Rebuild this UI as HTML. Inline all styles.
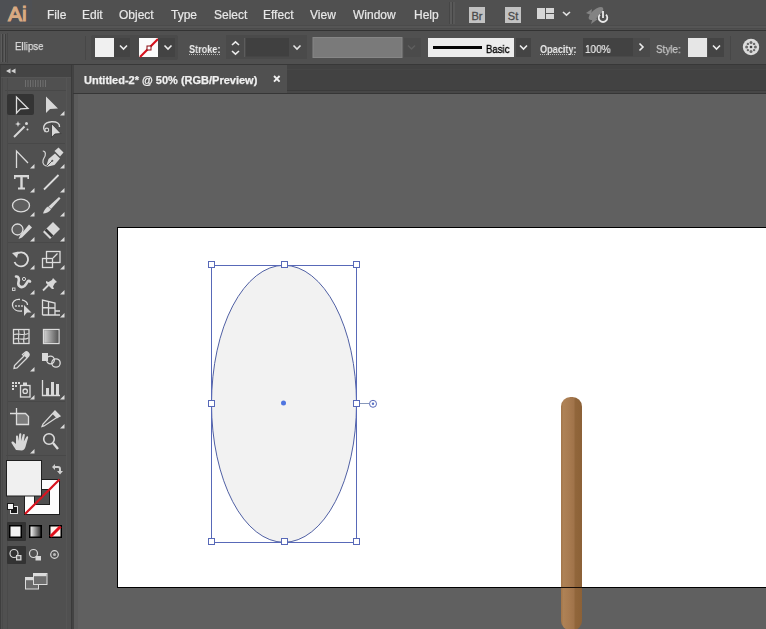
<!DOCTYPE html>
<html><head><meta charset="utf-8">
<style>
*{margin:0;padding:0;box-sizing:border-box}
html,body{width:766px;height:629px;overflow:hidden;background:#606060;font-family:"Liberation Sans",sans-serif;-webkit-font-smoothing:antialiased}
.mi,.ct{will-change:transform}
.a{position:absolute}
.mi{position:absolute;top:7px;font-size:12px;color:#e8e8e8;line-height:16px;white-space:nowrap;-webkit-text-stroke:0.2px #e8e8e8}
.ct{position:absolute;font-size:11px;color:#e0e0e0;line-height:14px;white-space:nowrap;-webkit-text-stroke:0.25px currentColor}
svg{position:absolute;left:0;top:0}
</style></head><body>
<!-- backgrounds -->
<div class="a" style="left:0;top:0;width:766px;height:30px;background:#505050"></div>
<div class="a" style="left:0;top:30px;width:766px;height:1px;background:#333"></div><div class="a" style="left:0;top:25px;width:766px;height:1px;background:#4b4b4b"></div><div class="a" style="left:0;top:26px;width:766px;height:2px;background:#555"></div><div class="a" style="left:0;top:28px;width:766px;height:1px;background:#4b4b4b"></div>
<div class="a" style="left:0;top:31px;width:766px;height:33px;background:#505050"></div>
<div class="a" style="left:0;top:64px;width:766px;height:1px;background:#383838"></div>
<div class="a" style="left:0;top:65px;width:71px;height:564px;background:#505050"></div>
<div class="a" style="left:0;top:65px;width:71px;height:13px;background:#444"></div>
<div class="a" style="left:71px;top:65px;width:1px;height:564px;background:#3a3a3a"></div><div class="a" style="left:72px;top:65px;width:2px;height:564px;background:#434343"></div><div class="a" style="left:74px;top:94px;width:4px;height:535px;background:#5b5b5b"></div>
<div class="a" style="left:73px;top:65px;width:693px;height:28px;background:#424242"></div>
<div class="a" style="left:74px;top:65px;width:213px;height:28px;background:#505050"></div>
<div class="a" style="left:73px;top:93px;width:693px;height:1px;background:#363636"></div><div class="a" style="left:287px;top:90px;width:479px;height:1px;background:#3b3b3b"></div><div class="a" style="left:287px;top:91px;width:479px;height:2px;background:#474747"></div><div class="a" style="left:287px;top:69px;width:479px;height:1px;background:#464646"></div>
<!-- artboard -->
<div class="a" style="left:117px;top:227px;width:660px;height:361px;background:#fff;border:1px solid #000"></div>

<svg width="766" height="629" viewBox="0 0 766 629">

<!-- ===== TOOLS PANEL ===== -->
<rect x="0" y="77" width="71" height="1" fill="#555"/>
<path d="M6,71 L10.5,68.5 L10.5,73.5 Z M11,71 L15.5,68.5 L15.5,73.5 Z" fill="#d0d0d0"/>
<g fill="#6e6e6e">
<rect x="25" y="80" width="1" height="7"/><rect x="27.5" y="80" width="1" height="7"/><rect x="30" y="80" width="1" height="7"/>
<rect x="32.5" y="80" width="1" height="7"/><rect x="35" y="80" width="1" height="7"/><rect x="37.5" y="80" width="1" height="7"/>
<rect x="40" y="80" width="1" height="7"/><rect x="42.5" y="80" width="1" height="7"/><rect x="45" y="80" width="1" height="7"/>
</g>
<rect x="5" y="90" width="61" height="1" fill="#484848"/>
<rect x="0" y="65" width="1" height="564" fill="#3e3e3e"/><rect x="2" y="78" width="1" height="551" fill="#4a4a4a"/><rect x="7" y="78" width="1" height="551" fill="#4a4a4a"/>
<rect x="66" y="78" width="1" height="551" fill="#555"/>
<rect x="7" y="94" width="27" height="21" rx="2" fill="#343434"/>
<rect x="8" y="143" width="57" height="1" fill="#484848"/>
<rect x="8" y="242" width="57" height="1" fill="#484848"/>
<rect x="8" y="401" width="57" height="1" fill="#484848"/>

<g fill="#dadada">
<!-- flyout triangles -->
<path d="M60,115.5 L64.5,115.5 L64.5,111 Z"/>
<path d="M60,168.5 L64.5,168.5 L64.5,164 Z"/><path d="M30,168.5 L34.5,168.5 L34.5,164 Z"/>
<path d="M30,192.5 L34.5,192.5 L34.5,188 Z"/><path d="M60,192.5 L64.5,192.5 L64.5,188 Z"/>
<path d="M30,216.5 L34.5,216.5 L34.5,212 Z"/><path d="M60,216.5 L64.5,216.5 L64.5,212 Z"/>
<path d="M30,241.5 L34.5,241.5 L34.5,237 Z"/><path d="M60,241.5 L64.5,241.5 L64.5,237 Z"/>
<path d="M30,269.5 L34.5,269.5 L34.5,265 Z"/><path d="M60,269.5 L64.5,269.5 L64.5,265 Z"/>
<path d="M30,294.5 L34.5,294.5 L34.5,290 Z"/><path d="M60,294.5 L64.5,294.5 L64.5,290 Z"/>
<path d="M30,317.5 L34.5,317.5 L34.5,313 Z"/><path d="M60,317.5 L64.5,317.5 L64.5,313 Z"/>
<path d="M30,371.5 L34.5,371.5 L34.5,367 Z"/>
<path d="M30,399.5 L34.5,399.5 L34.5,395 Z"/><path d="M60,399.5 L64.5,399.5 L64.5,395 Z"/>
<path d="M60,428.5 L64.5,428.5 L64.5,424 Z"/>
<path d="M30,453.5 L34.5,453.5 L34.5,449 Z"/>
</g>

<g stroke="#dcdcdc" fill="none" stroke-width="1.3" stroke-linejoin="miter">
<!-- selection -->
<path d="M16.5,97 L16.5,113 L20.5,108.8 L28,108.5 Z"/>
<!-- anchor point -->
<path d="M16.5,168 L16.5,151 L28,163"/>
<!-- line -->
<line x1="44" y1="189.5" x2="58.5" y2="175" stroke-width="1.8"/>
<!-- ellipse -->
<ellipse cx="21" cy="205.5" rx="8.5" ry="6.3" fill="#5e5e5e"/>
<!-- shaper circle -->
<circle cx="17.5" cy="229.5" r="5.5" fill="#5e5e5e"/>
<!-- rotate -->
<path d="M16,254.5 A7,7 0 1 1 14.5,262" stroke-width="1.8"/>
<!-- scale -->
<rect x="46.5" y="251.5" width="13.5" height="11"/>
<rect x="42.5" y="258.5" width="10" height="9"/>
<line x1="53" y1="258" x2="57.5" y2="253.5"/>
<!-- shape builder loop -->
<path d="M20,299.5 C15,299 12,302 12.5,305.5 C13,309.5 17,311.5 22,311 M22,299.8 C25,300.5 27.5,302 27.5,305"/>
<!-- perspective grid -->
<path d="M42.5,315 L42.5,300 L55,303 L55,315 M48.5,301.5 L48.5,315 M42.5,307.5 L55,308 M42.5,315 L60,315 M55,311 L60,311"/>
<!-- mesh -->
<rect x="13.5" y="329.5" width="15.5" height="14"/>
<path d="M14,334.5 C18,333 23,336 28.5,333.5 M14,339 C19,337.5 23,341 28.5,338 M18.5,330 C20,334 17,339 19,343 M24,330 C25.5,334 22.5,339 24,343" stroke-width="1.1"/>
<!-- gradient -->
<rect x="43.5" y="329.5" width="15.5" height="14"/>
<!-- blend circles -->
<circle cx="50.5" cy="360" r="3.8"/>
<circle cx="56" cy="363" r="4.2"/>
<!-- symbol sprayer bottle -->
<rect x="20.5" y="385.5" width="9.5" height="11.5"/>
<circle cx="25.2" cy="391.2" r="2.2"/>
<!-- column graph -->
<path d="M42.5,380 L42.5,395.5 L60,395.5"/>
<!-- artboard -->
<path d="M16.5,413.5 L25.5,413.5 L28.5,416.5 L28.5,424.5 L16.5,424.5 Z" fill="#7c7c7c"/><path d="M16.5,408 L16.5,413.5 M10,413.5 L16.5,413.5"/>
<!-- zoom -->
<circle cx="49" cy="439" r="5.3" stroke-width="1.6"/>
<line x1="53" y1="443" x2="58" y2="449" stroke-width="2.4"/>
</g>

<g fill="#d8d8d8">
<!-- direct selection -->
<path d="M46,96.5 L46,113 L50,109 L58,108.5 Z"/>
<!-- magic wand -->
<line x1="14" y1="137" x2="24.5" y2="126.5" stroke="#d8d8d8" stroke-width="2"/>
<path d="M18,121 L18.8,123.2 L21,124 L18.8,124.8 L18,127 L17.2,124.8 L15,124 L17.2,123.2 Z"/>
<circle cx="26.5" cy="123.5" r="1.5"/><circle cx="27.5" cy="129.5" r="1"/>
<!-- lasso -->
<path d="M45.5,132 C42,128 43.5,122.5 51.5,121.8 C57,121.5 60,123.5 59.5,127" fill="none" stroke="#d8d8d8" stroke-width="1.4"/>
<circle cx="46.8" cy="130" r="1.9" fill="none" stroke="#d8d8d8" stroke-width="1.1"/>
<path d="M51.5,123.5 L51.5,137.5 L54.8,134 L61,133.5 Z" stroke="#333" stroke-width="0.8"/>
<!-- pen -->
<path d="M42.8,151 C46,151 46,155 44,158 C42,161 42.5,165 46,166" fill="none" stroke="#d8d8d8" stroke-width="1.2"/>
<path d="M46,167 L48.5,159 L55,153.5 L60,158.5 L54.5,165 Z"/>
<path d="M54.5,151 L58.5,147.5 L63.5,152.5 L60,156.5 Z"/>
<line x1="46.5" y1="166.5" x2="52" y2="161" stroke="#555" stroke-width="1"/>
<circle cx="52.3" cy="160.7" r="1" fill="#555"/>
<!-- type -->
<rect x="14" y="175" width="15" height="2.3"/>
<rect x="14" y="175" width="1.6" height="4"/><rect x="27.4" y="175" width="1.6" height="4"/>
<rect x="20.3" y="175" width="2.4" height="14"/>
<rect x="18" y="187.5" width="7" height="2"/>
<!-- paintbrush -->
<path d="M59,197 L60.5,198.5 L51,209 L48.5,206.5 Z"/>
<path d="M48,206.5 L51,209.5 C49,212 46,213.5 43,213.5 C44,210.5 45.5,208 48,206.5 Z"/>
<!-- shaper pencil -->
<path d="M29,224.5 L32,227.5 L22,237.5 L18.5,239 L20,235.5 Z"/>
<!-- eraser -->
<path d="M43,232 L53,222 L60,229 L50,239 Z"/>
<path d="M44.5,230.5 L46.5,228.5 L53.5,235.5 L51.5,237.5 Z" fill="#3c3c3c"/>
<!-- rotate arrowhead -->
<path d="M12,253 L18.5,251.5 L17,258 Z"/>
<!-- warp -->
<path d="M16,276.5 C18.5,276 19.5,279 18.5,282 C17.5,286 21,288.5 24.5,286 C27.5,283.5 27.5,279 30,281.5" fill="none" stroke="#d8d8d8" stroke-width="2.6" stroke-linecap="round"/>
<circle cx="24" cy="279" r="1.6" fill="none" stroke="#d8d8d8" stroke-width="1"/>
<rect x="12.5" y="288" width="2.5" height="2.5" fill="none" stroke="#d8d8d8" stroke-width="0.9"/>
<!-- pin -->
<path d="M52,277 L57,282 L55,283 L53,286.5 L54,289 L52,289 L46,283 L46,281 L48.5,282 L52,280 L53,278 Z"/>
<line x1="43" y1="290.5" x2="48.5" y2="285" stroke="#d8d8d8" stroke-width="1.8"/>
<!-- shape builder arrow -->
<path d="M24,305 L24,316 L27,312.5 L31.5,312.5 Z"/>
<circle cx="16" cy="306" r="0.9"/><circle cx="19" cy="306" r="0.9"/><circle cx="22" cy="306" r="0.9"/>
<!-- eyedropper -->
<path d="M25.5,352 C27,351 30,354 29,355.5 L26.5,358.5 L17,368 L14,368.5 L14.5,365.5 L24,356 L22.5,354.5 Z" fill="none" stroke="#d8d8d8" stroke-width="1.3"/><path d="M25.5,352 C27,351 30,354 29,355.5 L26.5,358 L23.5,355 Z"/>
<!-- blend square -->
<rect x="42" y="353" width="6" height="8"/>
<!-- symbol sprayer dots -->
<rect x="12" y="382" width="2" height="2"/><rect x="15" y="382" width="2" height="2"/><rect x="18" y="382" width="2" height="2"/>
<rect x="12" y="385" width="2" height="2"/><rect x="15" y="385" width="2" height="2"/>
<rect x="12" y="388" width="2" height="2"/>
<rect x="23" y="382.5" width="4" height="3"/>
<!-- column bars -->
<rect x="46" y="388" width="3" height="7"/><rect x="51" y="382" width="3" height="13"/><rect x="56" y="384" width="3" height="11"/>
<!-- slice knife -->
<path d="M55,411 L60,416 L56,418 L44,426 L42,426.5 L43,424 Z" fill="none" stroke="#d8d8d8" stroke-width="1.3"/>
<path d="M55,411 L60,416 L57,418.5 L52.5,414 Z"/>
<!-- hand -->
<path d="M16,450 C14,447 12.5,444.5 11.5,443 C11,441.8 12.5,441 13.8,442 L16,444 L16,436.5 C16,435 18,435 18,436.5 L18.3,441 L19.2,434.2 C19.4,432.8 21.4,432.9 21.3,434.3 L21,441 L22.8,434.8 C23.1,433.5 25,433.8 24.8,435.2 L23.8,441.5 L26.3,437 C26.8,435.8 28.5,436.4 28.1,437.7 L26,445 C25.3,448 24,450.5 22,450.5 Z"/>
</g>
<!-- gradient fill -->
<defs><linearGradient id="gt" x1="0" x2="1"><stop offset="0" stop-color="#cfcfcf"/><stop offset="1" stop-color="#555"/></linearGradient>
<linearGradient id="gt2" x1="0" x2="1"><stop offset="0" stop-color="#f4f4f4"/><stop offset="1" stop-color="#333"/></linearGradient></defs>
<rect x="44.2" y="330.2" width="14.1" height="12.6" fill="url(#gt)"/>


<!-- ===== FILL/STROKE ===== -->
<rect x="6" y="455" width="60" height="1" fill="#484848"/>
<!-- stroke box -->
<rect x="24" y="479" width="36" height="36" fill="#1e1e1e"/>
<rect x="25" y="480" width="34" height="34" fill="#fdfdfd"/>
<rect x="34" y="489" width="16" height="16" fill="#1e1e1e"/>
<rect x="35" y="490" width="14" height="14" fill="#4f4f4f"/>
<line x1="25" y1="514" x2="59.5" y2="479.5" stroke="#d8141f" stroke-width="2.2"/>
<!-- fill box -->
<rect x="6.5" y="460.5" width="35" height="35.5" fill="#f0f0f0" stroke="#202020" stroke-width="1"/>
<!-- swap arrows -->
<path d="M52,467 L55,464 L55,466 L58,466 C60,466 61,467 61,469 L61,471 L63,471 L60,474.5 L57,471 L59,471 L59,469 C59,468.5 58.5,468 58,468 L55,468 L55,470 Z" fill="#cfcfcf"/>
<!-- default icon -->
<rect x="10.5" y="506.5" width="7" height="7" fill="#1a1a1a" stroke="#e8e8e8" stroke-width="1"/>
<rect x="7.5" y="503.5" width="6" height="6" fill="#f4f4f4" stroke="#1a1a1a" stroke-width="1"/>
<!-- color/gradient/none -->
<rect x="7" y="522" width="19" height="19" rx="1" fill="#333"/>
<rect x="9" y="525" width="13" height="13" fill="#000"/>
<rect x="10.5" y="526.5" width="10" height="10" fill="#f2f2f2"/>
<rect x="29" y="525" width="13" height="13" fill="#000"/>
<rect x="30.5" y="526.5" width="10" height="10" fill="url(#gt2)"/>
<rect x="49" y="525" width="13" height="13" fill="#000"/>
<rect x="50.5" y="526.5" width="10" height="10" fill="#fff6f0"/>
<line x1="50.5" y1="536.5" x2="60.5" y2="526.5" stroke="#e0101c" stroke-width="3"/>
<!-- draw modes -->
<rect x="7" y="546" width="19" height="18" rx="1" fill="#333"/>
<g fill="none" stroke="#d8d8d8" stroke-width="1.2">
<circle cx="14" cy="553.5" r="4"/>
<circle cx="33.5" cy="553.5" r="4"/>
<circle cx="54.5" cy="554.5" r="3.8"/>
</g>
<rect x="16" y="555" width="5.5" height="5.5" fill="#d8d8d8"/>
<rect x="17.2" y="556.2" width="3" height="3" fill="#555"/>
<rect x="35.5" y="556" width="5.5" height="4.5" fill="#d8d8d8"/>
<circle cx="54.5" cy="554.5" r="1.5" fill="#bbb"/>
<!-- screen mode -->
<rect x="25.5" y="577.5" width="13" height="11.5" fill="#6a6a6a" stroke="#dcdcdc" stroke-width="1"/>
<rect x="26" y="578" width="12" height="2.2" fill="#dcdcdc"/>
<rect x="33.5" y="573.5" width="13.5" height="11" fill="#6e6e6e" stroke="#dcdcdc" stroke-width="1"/>
<rect x="34" y="574" width="12.5" height="2.2" fill="#dcdcdc"/>

<!-- ===== CANVAS OBJECTS ===== -->
<defs>
<linearGradient id="stick" x1="0" x2="1">
<stop offset="0" stop-color="#a27548"/><stop offset="0.12" stop-color="#ae8256"/>
<stop offset="0.38" stop-color="#a87b50"/><stop offset="0.62" stop-color="#a0734a"/>
<stop offset="0.67" stop-color="#91663b"/><stop offset="1" stop-color="#8c6137"/>
</linearGradient>
</defs>
<path d="M561,621 L561,406.5 A9.5,9.5 0 0 1 570.5,397 L572.5,397 A9.5,9.5 0 0 1 582,406.5 L582,621 A9,9 0 0 1 573,630 L570,630 A9,9 0 0 1 561,621 Z" fill="url(#stick)"/>
<rect x="561" y="587" width="21" height="1" fill="#1a0e06"/>
<ellipse cx="284" cy="403.8" rx="72.5" ry="138.5" fill="#f2f2f2" stroke="#5060a4" stroke-width="1"/>
<g stroke="#5869b8" stroke-width="1" fill="none">
<rect x="211.5" y="265.5" width="145" height="277"/>
<line x1="360" y1="403.5" x2="369" y2="403.5" stroke="#8899bb"/>
<circle cx="373" cy="403.8" r="3.5"/>
</g>
<circle cx="373" cy="403.8" r="1.2" fill="#5a72c6"/>
<circle cx="283.5" cy="403" r="2.5" fill="#4f75e0"/>
<g fill="#fff" stroke="#5869b8" stroke-width="1">
<rect x="208.5" y="261.5" width="6" height="6"/><rect x="281.5" y="261.5" width="6" height="6"/><rect x="353.5" y="261.5" width="6" height="6"/>
<rect x="208.5" y="400.5" width="6" height="6"/><rect x="353.5" y="400.5" width="6" height="6"/>
<rect x="208.5" y="538.5" width="6" height="6"/><rect x="281.5" y="538.5" width="6" height="6"/><rect x="353.5" y="538.5" width="6" height="6"/>
</g>

<path d="M274,76 L279.6,81.6 M279.6,76 L274,81.6" stroke="#f0f0f0" stroke-width="1.9"/>
<!-- ===== MENUBAR ===== -->
<rect x="0" y="0" width="32" height="24" fill="#4e5054"/><text x="8" y="21" font-size="21" fill="#d9aa82" stroke="#d9aa82" stroke-width="1.1" font-family="Liberation Sans">Ai</text>
<rect x="449" y="2" width="1" height="22" fill="#464646"/><rect x="450" y="2" width="2" height="22" fill="#5a5a5a"/><rect x="452" y="2" width="1" height="22" fill="#444"/><rect x="453" y="2" width="2" height="22" fill="#585858"/>
<rect x="469" y="7" width="16" height="16" fill="#c2c2c2"/>
<text x="477" y="20" font-size="11" text-anchor="middle" fill="#4a4a4a" stroke="#4a4a4a" stroke-width="0.3" font-family="Liberation Sans">Br</text>
<rect x="505" y="7" width="16" height="16" fill="#c2c2c2"/>
<text x="513" y="20" font-size="11" text-anchor="middle" fill="#4a4a4a" stroke="#4a4a4a" stroke-width="0.3" font-family="Liberation Sans">St</text>
<rect x="537" y="8" width="8" height="11" fill="#d6d6d6"/>
<rect x="546" y="8" width="8" height="5" fill="#d6d6d6"/>
<rect x="546" y="14" width="8" height="5" fill="#d6d6d6"/>
<polyline points="563,12 566.5,15.2 570,12" fill="none" stroke="#e0e0e0" stroke-width="1.6"/>
<g fill="#8c8c8c" opacity="0.85"><ellipse cx="596" cy="13.5" rx="9" ry="4" transform="rotate(-40 596 13.5)"/><path d="M586,13 L592,9 L591,15 Z"/><path d="M591,24 L593,17 L598,19 Z"/></g>
<circle cx="603" cy="18.5" r="5.6" fill="#505050"/>
<path d="M600,14.6 A4.3,4.3 0 1 0 606,14.6" fill="none" stroke="#e8e8e8" stroke-width="1.8"/>
<rect x="602.1" y="11" width="1.8" height="7" fill="#e8e8e8"/>

<!-- ===== CONTROL BAR ===== -->
<g fill="#5c5c5c">
<rect x="1" y="34" width="1" height="28"/><rect x="4" y="34" width="1" height="28"/>
</g>
<g fill="#3e3e3e">
<rect x="2" y="34" width="1" height="28"/><rect x="5" y="34" width="1" height="28"/>
</g>
<rect x="7" y="33" width="1" height="30" fill="#474747"/>
<rect x="85" y="36" width="1" height="24" fill="#474747"/>
<!-- fill swatch -->
<rect x="91" y="35" width="87" height="25" rx="2" fill="#4a4a4a"/>
<rect x="95" y="38" width="19" height="19" fill="#f0f0f0"/>
<rect x="114" y="38" width="16" height="19" fill="#434343"/>
<polyline points="120,45.5 123.5,49 127,45.5" fill="none" stroke="#ececec" stroke-width="1.6"/>
<rect x="139" y="38" width="19" height="19" fill="#fbfbfb"/>
<line x1="140" y1="57" x2="158" y2="39" stroke="#d6101c" stroke-width="2.2"/>
<rect x="147" y="46" width="4" height="4" fill="#fff" stroke="#8a0a10" stroke-width="1"/>
<rect x="158" y="38" width="17" height="19" fill="#434343"/>
<polyline points="164.5,45.5 168,49 171.5,45.5" fill="none" stroke="#ececec" stroke-width="1.6"/>
<!-- stroke label underline -->
<line x1="189" y1="54.5" x2="221" y2="54.5" stroke="#b8b8b8" stroke-width="1" stroke-dasharray="1,1"/>
<!-- spinner -->
<rect x="226" y="35" width="81" height="24" fill="#4a4a4a"/><rect x="244" y="38" width="1" height="19" fill="#5c5c5c"/>
<polyline points="232,45 235.5,41.8 239,45" fill="none" stroke="#ececec" stroke-width="1.6"/>
<polyline points="232,51 235.5,54.2 239,51" fill="none" stroke="#ececec" stroke-width="1.6"/>
<rect x="246" y="38" width="43" height="18.5" fill="#404040"/>

<polyline points="293.5,45.5 297,49 300.5,45.5" fill="none" stroke="#e4e4e4" stroke-width="1.6"/>
<!-- disabled bar -->
<rect x="313" y="37.5" width="89" height="20" fill="#7a7a7a" stroke="#868686" stroke-width="1"/>
<rect x="404" y="38" width="17" height="19" fill="#4b4b4b"/>
<polyline points="408,45.5 411.5,49 415,45.5" fill="none" stroke="#5e5e5e" stroke-width="1.5"/>
<!-- profile -->
<rect x="428" y="38" width="86" height="19" fill="#ececec"/>
<rect x="433" y="46" width="49" height="3" fill="#050505"/>
<rect x="516" y="38" width="15" height="19" fill="#444"/>
<polyline points="520,45.5 523.5,49 527,45.5" fill="none" stroke="#ececec" stroke-width="1.6"/>
<!-- opacity -->
<line x1="540" y1="54.5" x2="576" y2="54.5" stroke="#b8b8b8" stroke-width="1" stroke-dasharray="1,1"/>
<rect x="583" y="38" width="50" height="18.5" fill="#424242"/>
<rect x="633" y="38" width="17" height="19" fill="#4a4a4a"/>
<polyline points="639.5,43.5 643,47 639.5,50.5" fill="none" stroke="#ececec" stroke-width="1.6"/>
<!-- style -->
<rect x="688" y="38" width="19" height="19" fill="#e6e6e6"/>
<rect x="708" y="38" width="16" height="19" fill="#444"/>
<polyline points="713,45.5 716.5,49 720,45.5" fill="none" stroke="#ececec" stroke-width="1.6"/>
<rect x="730" y="36" width="1" height="24" fill="#474747"/>
<!-- globe -->
<circle cx="751" cy="47" r="8.2" fill="#dcdcdc"/>
<g fill="#6a6a6a">
<circle cx="751" cy="42.6" r="1.5"/><circle cx="751" cy="51.4" r="1.5"/>
<circle cx="746.6" cy="47" r="1.5"/><circle cx="755.4" cy="47" r="1.5"/>
<circle cx="747.9" cy="43.9" r="1.2"/><circle cx="754.1" cy="43.9" r="1.2"/>
<circle cx="747.9" cy="50.1" r="1.2"/><circle cx="754.1" cy="50.1" r="1.2"/>
<circle cx="751" cy="47" r="1.3" fill="#444"/>
</g>
</svg>
<!-- menu text -->
<div class="mi" style="left:47px">File</div>
<div class="mi" style="left:82px">Edit</div>
<div class="mi" style="left:119px">Object</div>
<div class="mi" style="left:171px">Type</div>
<div class="mi" style="left:214px">Select</div>
<div class="mi" style="left:263px">Effect</div>
<div class="mi" style="left:310px">View</div>
<div class="mi" style="left:353px">Window</div>
<div class="mi" style="left:414px">Help</div>

<!-- control bar text -->
<div class="ct" style="left:15px;top:39px;color:#dcdcdc;transform:scaleX(0.88);transform-origin:0 0">Ellipse</div>
<div class="ct" style="left:189px;top:42px;color:#ececec;font-weight:bold;-webkit-text-stroke:0;transform:scaleX(0.83);transform-origin:0 0">Stroke:</div>
<div class="ct" style="left:540px;top:42px;color:#ececec;font-weight:bold;-webkit-text-stroke:0;transform:scaleX(0.83);transform-origin:0 0">Opacity:</div>
<div class="ct" style="left:486px;top:42px;color:#000;-webkit-text-stroke:0.35px #000;transform:scaleX(0.87);transform-origin:0 0">Basic</div>
<div class="ct" style="left:585px;top:42px;color:#f2f2f2;-webkit-text-stroke:0.15px #f2f2f2;transform:scaleX(0.91);transform-origin:0 0">100%</div>
<div class="ct" style="left:656px;top:42px;color:#c8c8c8;transform:scaleX(0.9);transform-origin:0 0">Style:</div>

<!-- tab text -->
<div class="ct" style="left:84px;top:73px;font-weight:bold;color:#f0f0f0">Untitled-2* @ 50% (RGB/Preview)</div>

</body></html>
